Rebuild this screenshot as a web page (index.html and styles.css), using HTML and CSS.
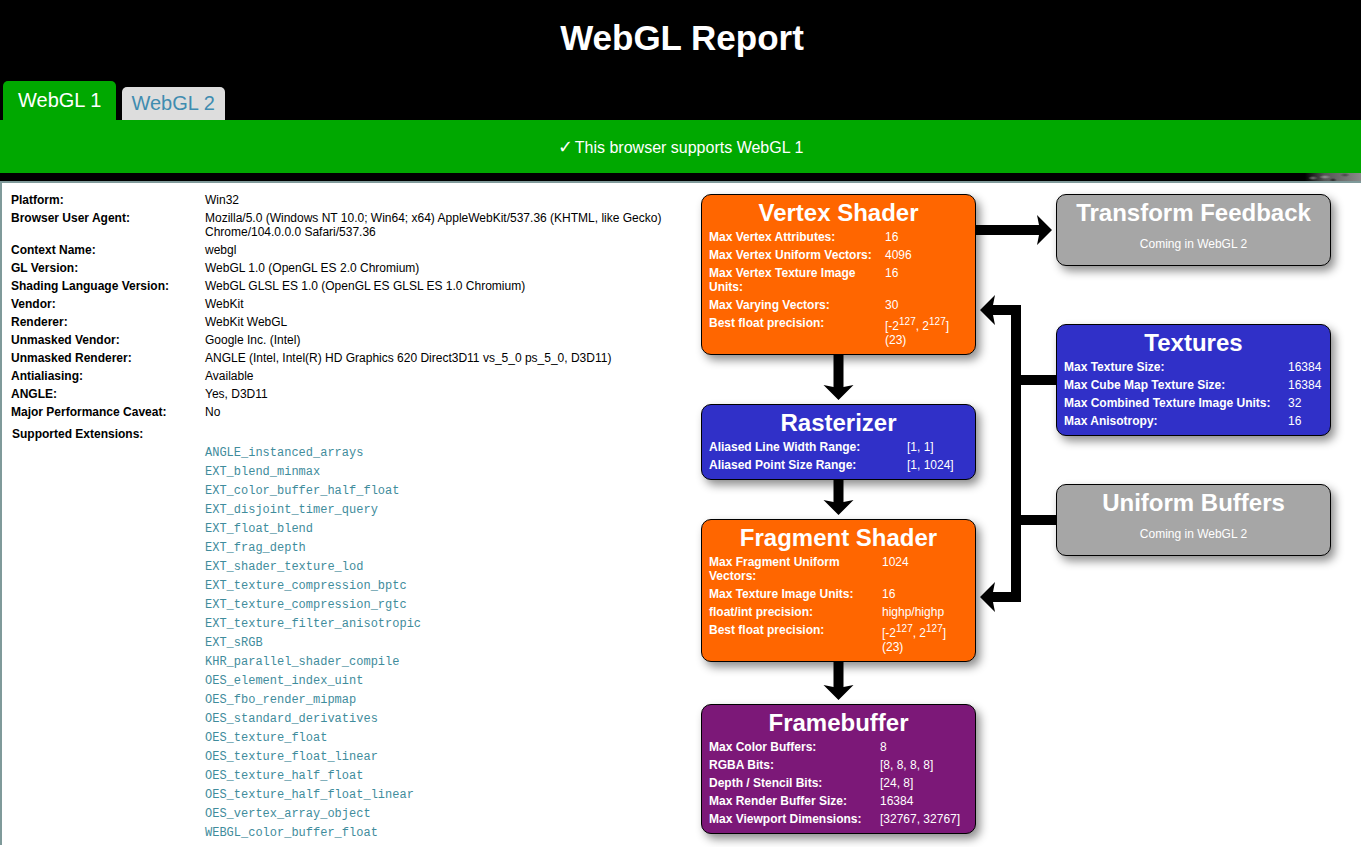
FILE: index.html
```html
<!DOCTYPE html>
<html lang="en">
<head>
	<meta charset="UTF-8">
	<title>WebGL Report</title>
	<link rel="stylesheet" href="styles.css">
</head>
<body>
	<div id="header">
		<h1>WebGL Report</h1>
		<ul class="tabs">
			<li class="tab active">WebGL 1</li>
			<li class="tab">WebGL 2</li>
		</ul>
		<div class="banner"><span class="check">&#10003;</span> This browser supports WebGL 1</div>
		<div class="strip"><span class="strip-noise"></span></div>
	</div>

	<div id="main">
		<div class="report">
			<table class="info">
				<tr><th>Platform:</th><td>Win32</td></tr>
				<tr><th>Browser User Agent:</th><td>Mozilla/5.0 (Windows NT 10.0; Win64; x64) AppleWebKit/537.36 (KHTML, like Gecko) Chrome/104.0.0.0 Safari/537.36</td></tr>
				<tr><th>Context Name:</th><td>webgl</td></tr>
				<tr><th>GL Version:</th><td>WebGL 1.0 (OpenGL ES 2.0 Chromium)</td></tr>
				<tr><th>Shading Language Version:</th><td>WebGL GLSL ES 1.0 (OpenGL ES GLSL ES 1.0 Chromium)</td></tr>
				<tr><th>Vendor:</th><td>WebKit</td></tr>
				<tr><th>Renderer:</th><td>WebKit WebGL</td></tr>
				<tr><th>Unmasked Vendor:</th><td>Google Inc. (Intel)</td></tr>
				<tr><th>Unmasked Renderer:</th><td>ANGLE (Intel, Intel(R) HD Graphics 620 Direct3D11 vs_5_0 ps_5_0, D3D11)</td></tr>
				<tr><th>Antialiasing:</th><td>Available</td></tr>
				<tr><th>ANGLE:</th><td>Yes, D3D11</td></tr>
				<tr><th>Major Performance Caveat:</th><td>No</td></tr>
			</table>
			<h2>Supported Extensions:</h2>
			<ul class="extensions">
				<li>ANGLE_instanced_arrays</li>
				<li>EXT_blend_minmax</li>
				<li>EXT_color_buffer_half_float</li>
				<li>EXT_disjoint_timer_query</li>
				<li>EXT_float_blend</li>
				<li>EXT_frag_depth</li>
				<li>EXT_shader_texture_lod</li>
				<li>EXT_texture_compression_bptc</li>
				<li>EXT_texture_compression_rgtc</li>
				<li>EXT_texture_filter_anisotropic</li>
				<li>EXT_sRGB</li>
				<li>KHR_parallel_shader_compile</li>
				<li>OES_element_index_uint</li>
				<li>OES_fbo_render_mipmap</li>
				<li>OES_standard_derivatives</li>
				<li>OES_texture_float</li>
				<li>OES_texture_float_linear</li>
				<li>OES_texture_half_float</li>
				<li>OES_texture_half_float_linear</li>
				<li>OES_vertex_array_object</li>
				<li>WEBGL_color_buffer_float</li>
			</ul>
		</div>

		<div class="pipeline">
			<div class="column">
				<div class="box orange vertex">
					<h3>Vertex Shader</h3>
					<table>
						<tr><th>Max Vertex Attributes:</th><td>16</td></tr>
						<tr><th>Max Vertex Uniform Vectors:</th><td>4096</td></tr>
						<tr><th>Max Vertex Texture Image Units:</th><td>16</td></tr>
						<tr><th>Max Varying Vectors:</th><td>30</td></tr>
						<tr><th>Best float precision:</th><td>[-2<sup>127</sup>, 2<sup>127</sup>] (23)</td></tr>
					</table>
				</div>
				<div class="box blue rasterizer">
					<h3>Rasterizer</h3>
					<table>
						<tr><th>Aliased Line Width Range:</th><td>[1, 1]</td></tr>
						<tr><th>Aliased Point Size Range:</th><td>[1, 1024]</td></tr>
					</table>
				</div>
				<div class="box orange fragment">
					<h3>Fragment Shader</h3>
					<table>
						<tr><th>Max Fragment Uniform Vectors:</th><td>1024</td></tr>
						<tr><th>Max Texture Image Units:</th><td>16</td></tr>
						<tr><th>float/int precision:</th><td>highp/highp</td></tr>
						<tr><th>Best float precision:</th><td>[-2<sup>127</sup>, 2<sup>127</sup>] (23)</td></tr>
					</table>
				</div>
				<div class="box purple framebuffer">
					<h3>Framebuffer</h3>
					<table>
						<tr><th>Max Color Buffers:</th><td>8</td></tr>
						<tr><th>RGBA Bits:</th><td>[8, 8, 8, 8]</td></tr>
						<tr><th>Depth / Stencil Bits:</th><td>[24, 8]</td></tr>
						<tr><th>Max Render Buffer Size:</th><td>16384</td></tr>
						<tr><th>Max Viewport Dimensions:</th><td>[32767, 32767]</td></tr>
					</table>
				</div>
			</div>

			<div class="column side">
				<div class="box grey feedback">
					<h3>Transform Feedback</h3>
					<p>Coming in WebGL 2</p>
				</div>
				<div class="box blue textures">
					<h3>Textures</h3>
					<table>
						<tr><th>Max Texture Size:</th><td>16384</td></tr>
						<tr><th>Max Cube Map Texture Size:</th><td>16384</td></tr>
						<tr><th>Max Combined Texture Image Units:</th><td>32</td></tr>
						<tr><th>Max Anisotropy:</th><td>16</td></tr>
					</table>
				</div>
				<div class="box grey buffers">
					<h3>Uniform Buffers</h3>
					<p>Coming in WebGL 2</p>
				</div>
			</div>

			<!-- arrows, in the pipeline's own coordinates (page x - 690, page y - 183) -->
			<svg class="arrows" width="671" height="664" viewBox="690 183 671 664">
				<path d="M976 225H1041V235H976Z"/>
				<path d="M1037 215L1052 230L1037 245L1040 230Z"/>
				<path d="M833.5 355H843.5V388H833.5Z"/>
				<path d="M823.5 385L838.5 400L853.5 385L838.5 388Z"/>
				<path d="M833.5 480H843.5V503H833.5Z"/>
				<path d="M823.5 500L838.5 515L853.5 500L838.5 503Z"/>
				<path d="M833.5 662H843.5V688H833.5Z"/>
				<path d="M823.5 685L838.5 700L853.5 685L838.5 688Z"/>
				<path d="M992 305H1021V602H992V592H1011V315H992Z"/>
				<path d="M1021 375H1056V385H1021Z"/>
				<path d="M1021 515H1056V525H1021Z"/>
				<path d="M995 295L980 310L995 325L992 310Z"/>
				<path d="M995 582L980 597L995 612L992 597Z"/>
			</svg>
		</div>
	</div>
</body>
</html>
```
FILE: styles.css
```css
html, body {
	height: 100%;
	margin: 0;
	overflow: hidden;
	background: #fff;
	font-family: "Liberation Sans", Arial, sans-serif;
	font-size: 12px;
	color: #000;
}

/* Header */

#header {
	background: #000;
}

h1 {
	margin: 0;
	padding-left: 3px;
	height: 81px;
	line-height: 76px;
	font-size: 35px;
	font-weight: bold;
	text-align: center;
	color: #fff;
}

.tabs {
	display: flex;
	align-items: flex-end;
	gap: 6px;
	height: 39px;
	margin: 0;
	padding: 0 0 0 3px;
	list-style: none;
}

.tab {
	height: 33px;
	padding: 0 10px 0 9px;
	line-height: 33px;
	font-size: 20px;
	color: #3f8cb0;
	background: #ddd;
	border-radius: 5px 5px 0 0;
}

.tab.active {
	height: 39px;
	padding: 0 15px;
	line-height: 39px;
	color: #fff;
	background: #00a800;
}

.banner {
	height: 53px;
	line-height: 55px;
	font-size: 16px;
	text-align: center;
	color: #fff;
	background: #00a800;
}

.check {
	margin-right: -2px;
	font-size: 18px;
	line-height: 16px;
}

.strip {
	position: relative;
	height: 8px;
	background: #000;
}

.strip-noise {
	position: absolute;
	top: 0;
	right: 0;
	width: 56px;
	height: 8px;
	background:
		radial-gradient(ellipse 5px 2px at 8px 5px, #777, transparent),
		radial-gradient(ellipse 6px 2px at 20px 4px, #999, transparent),
		radial-gradient(ellipse 4px 2px at 28px 7px, #222, transparent),
		radial-gradient(ellipse 5px 2px at 40px 2px, #444, transparent),
		linear-gradient(90deg, #000, #555 35%, #8a8a8a);
}

/* Main area */

#main {
	display: flex;
	height: 664px;
	box-sizing: border-box;
	border-top: 2px solid #7f9a9a;
	border-left: 2px solid #7f9a9a;
}

.report {
	width: 688px;
	flex: none;
	padding: 8px 0 0 5px;
	box-sizing: border-box;
}

.info {
	border-collapse: collapse;
}

.info th,
.info td {
	padding: 2px 4px;
	vertical-align: top;
	text-align: left;
}

.info th {
	width: 186px;
}

.info td {
	width: 464px;
}

h2 {
	margin: 6px 0 0;
	padding-left: 5px;
	font-size: 12px;
	line-height: 14px;
}

.extensions {
	margin: 3px 0 0;
	padding: 0 0 0 198px;
	list-style: none;
	font-family: "Liberation Mono", "Courier New", monospace;
	font-size: 12px;
	line-height: 19px;
	color: #3f8c9c;
}

/* Pipeline diagram */

.pipeline {
	position: relative;
	display: flex;
	flex: 1;
	gap: 80px;
	padding: 11px 0 0 11px;
}

.column {
	display: flex;
	flex-direction: column;
	width: 275px;
}

.box {
	width: 275px;
	padding: 0 7px 5px;
	box-sizing: border-box;
	border: 1px solid #000;
	border-radius: 10px;
	box-shadow: 4px 5px 10px rgba(0, 0, 0, 0.45);
	color: #fff;
}

.orange { background: #f60; }
.blue { background: #3030c8; }
.purple { background: #7c1878; }
.grey { background: #a6a6a6; }

.box h3 {
	margin: 0;
	height: 33px;
	line-height: 36px;
	font-size: 24px;
	font-weight: bold;
	text-align: center;
}

.box p {
	margin: 9px 0 0;
	height: 23px;
	line-height: 14px;
	text-align: center;
}

.box table {
	width: 100%;
	table-layout: fixed;
	border-collapse: collapse;
}

.box th,
.box td {
	padding: 2px 0;
	vertical-align: top;
	text-align: left;
}

.box th {
	font-weight: bold;
}

.box td {
	font-weight: normal;
}

.vertex th { width: 176px; }
.rasterizer th { width: 198px; }
.fragment th { width: 173px; }
.framebuffer th { width: 171px; }
.textures th { width: 224px; }

.rasterizer { margin-top: 49px; }
.fragment { margin-top: 39px; }
.framebuffer { margin-top: 42px; }
.textures { margin-top: 58px; }
.buffers { margin-top: 48px; }

.arrows {
	position: absolute;
	top: 0;
	left: 0;
	fill: #000;
	pointer-events: none;
}
```
